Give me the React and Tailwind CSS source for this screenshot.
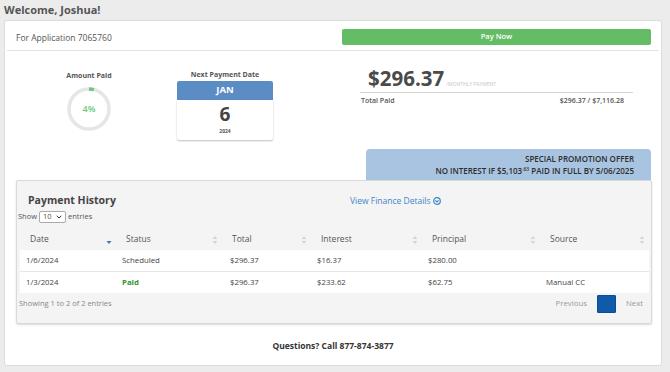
import React from "react";

function SortBoth() {
  return (
    <svg width="6" height="10" viewBox="0 0 6 10" className="shrink-0">
      <path d="M3 1 L5.5 4 L0.5 4 Z" fill="#d6d6d6" />
      <path d="M3 9 L5.5 6 L0.5 6 Z" fill="#d6d6d6" />
    </svg>
  );
}

function SortDesc() {
  return (
    <svg width="6" height="10" viewBox="0 0 6 10" className="shrink-0">
      <path d="M3 9 L5.5 6 L0.5 6 Z" fill="#4a72b8" />
    </svg>
  );
}

const cols = "grid grid-cols-[96px_106px_89px_111px_118px_109px]";

export default function App() {
  const r = 20;
  const c = 2 * Math.PI * r;
  const rows = [
    { date: "1/6/2024", status: "Scheduled", total: "$296.37", interest: "$16.37", principal: "$280.00", source: "" },
    { date: "1/3/2024", status: "Paid", total: "$296.37", interest: "$233.62", principal: "$62.75", source: "Manual CC" },
  ];
  return (
    <div className="w-[670px] h-[372px] bg-[#ececec] overflow-hidden text-[#444]" style={{ fontFamily: '"Open Sans", sans-serif' }}>
      <div className="h-[20px] pl-[4px] pt-[2px] text-[11px] leading-[15px] font-bold text-[#555]">Welcome, Joshua!</div>
      <div className="ml-[4px] w-[658px] h-[346px] bg-white border border-[#dcdcdc] rounded-[3px]">
        {/* header */}
        <div className="mx-[2px] flex items-center h-[30px] border-b border-[#e3e3e3] pl-[9px] pr-[8px] pt-[3px]">
          <div className="flex-1 text-[8.5px] text-[#555] pt-[3px]">For Application 7065760</div>
          <div className="w-[309px] h-[16px] bg-[#64bc64] rounded-[2px] flex items-center justify-center text-white text-[7.5px] font-semibold">Pay Now</div>
        </div>
        {/* top section */}
        <div className="flex h-[98px]">
          <div className="w-[168px] flex flex-col items-center pt-[20px]">
            <div className="text-[7px] leading-[10px] font-bold text-[#555]">Amount Paid</div>
            <div className="relative w-[46px] h-[46px] mt-[5px]">
              <svg width="46" height="46" viewBox="0 0 46 46">
                <circle cx="23" cy="23" r={r} fill="none" stroke="#e6e6e6" strokeWidth="3.5" />
                <circle cx="23" cy="23" r={r} fill="none" stroke="#6cc978" strokeWidth="3.5" strokeDasharray={`${c * 0.04} ${c}`} transform="rotate(-90 23 23)" />
              </svg>
              <div className="absolute inset-0 flex items-center justify-center text-[9px] font-semibold text-[#6cc978]">4%</div>
            </div>
          </div>
          <div className="ml-[4px] w-[96px] flex flex-col pt-[19px]">
            <div className="text-[7px] leading-[10px] font-bold text-[#555] text-center">Next Payment Date</div>
            <div className="mt-[1px] h-[19px] bg-[#5b8cc3] rounded-t-[2px] flex items-center justify-center text-white text-[9.5px] font-bold">JAN</div>
            <div className="h-[40px] bg-white rounded-b-[2px] shadow-[0_1px_2px_rgba(0,0,0,0.25)] flex flex-col items-center">
              <div className="text-[19px] leading-[24px] font-bold text-[#444] mt-[2px]">6</div>
              <div className="text-[5px] leading-[6px] font-bold text-[#555] mt-[2px]">2024</div>
            </div>
          </div>
          <div className="ml-[87px] w-[273px] flex flex-col pt-[13px]">
            <div className="flex items-baseline h-[29px] border-b border-[#d4d4d4] pl-[8px]">
              <span className="text-[20.5px] leading-[28px] font-bold text-[#4a4a4a]">$296.37</span>
              <span className="ml-[2px] text-[5px] text-[#c4c4c4]">/MONTHLY PAYMENT</span>
            </div>
            <div className="flex justify-between pl-[1px] pr-[9px] mt-[3px] text-[7px] font-semibold text-[#555]">
              <span>Total Paid</span>
              <span>$296.37 / $7,116.28</span>
            </div>
          </div>
        </div>
        {/* promo */}
        <div className="flex justify-end pr-[10px]">
          <div className="w-[285px] h-[31px] bg-[#a9c4e1] rounded-t-[4px] flex flex-col items-end justify-center pr-[17px] text-[8px] leading-[12px] font-semibold text-[#2d2d2d]">
            <div>SPECIAL PROMOTION OFFER</div>
            <div>NO INTEREST IF $5,103<sup className="text-[5px]">.63</sup> PAID IN FULL BY 5/06/2025</div>
          </div>
        </div>
        {/* payment history */}
        <div className="ml-[11px] w-[636px] h-[144px] bg-[#f4f4f4] border border-[#dadada] rounded-[2px] shadow-[0_1px_2px_rgba(0,0,0,0.15)]">
          <div className="flex items-center h-[16px] mt-[12px] pl-[11px]">
            <div className="w-[322px] text-[10.5px] font-bold text-[#444]">Payment History</div>
            <div className="text-[8.5px] text-[#3d87c9] flex items-center gap-[2px]">
              View Finance Details
              <svg width="8" height="8" viewBox="0 0 8 8">
                <circle cx="4" cy="4" r="3.3" fill="none" stroke="#3d87c9" strokeWidth="1.2" />
                <path d="M2.3 3.3 L4 5 L5.7 3.3" fill="none" stroke="#3d87c9" strokeWidth="1.1" />
              </svg>
            </div>
          </div>
          <div className="flex items-center h-[14px] mt-[1px] pl-[1px] text-[7.5px] text-[#555]">
            <span>Show</span>
            <div className="mx-[2px] w-[27px] h-[12px] bg-white border border-[#aaa] rounded-[2px] flex items-center justify-between px-[3px]">
              <span>10</span>
              <svg width="6" height="4" viewBox="0 0 6 4"><path d="M0.7 0.8 L3 3 L5.3 0.8" fill="none" stroke="#333" strokeWidth="1" /></svg>
            </div>
            <span>entries</span>
          </div>
          <div className="ml-[3px] mr-[2px] mt-[5px]">
            <div className={`${cols} h-[21px] items-center text-[8.5px] text-[#555]`}>
              {["Date", "Status", "Total", "Interest", "Principal", "Source"].map((h, i) => (
                <div key={h} className="flex items-center justify-between pl-[10px] pr-[4px]">
                  <span>{h}</span>
                  {i === 0 ? <SortDesc /> : <SortBoth />}
                </div>
              ))}
            </div>
            {rows.map((row, i) => (
              <div key={i} className={`${cols} items-center bg-white text-[7.8px] text-[#444] ${i === 0 ? "border-b border-[#e6e6e6] h-[22px]" : "h-[21px]"}`}>
                <div className="pl-[6px]">{row.date}</div>
                <div className={`pl-[6px] ${row.status === "Paid" ? "font-bold text-[#2e922e]" : ""}`}>{row.status}</div>
                <div className="pl-[8px]">{row.total}</div>
                <div className="pl-[6px]">{row.interest}</div>
                <div className="pl-[6px]">{row.principal}</div>
                <div className="pl-[6px]">{row.source}</div>
              </div>
            ))}
          </div>
          <div className="flex items-center h-[20px] mt-[1px] pl-[2px] pr-[8px]">
            <div className="flex-1 text-[7.5px] text-[#888]">Showing 1 to 2 of 2 entries</div>
            <div className="text-[7.8px] text-[#999]">Previous</div>
            <div className="ml-[10px] w-[19px] h-[18px] bg-[#0f5aa9] border border-[#0b4d94] rounded-[1px] flex items-center justify-center text-[8px] text-[#0f5aa9]">1</div>
            <div className="ml-[10px] text-[7.8px] text-[#999]">Next</div>
          </div>
        </div>
        <div className="mt-[16px] text-center text-[8.5px] font-bold text-[#333]">Questions? Call 877-874-3877</div>
      </div>
    </div>
  );
}
